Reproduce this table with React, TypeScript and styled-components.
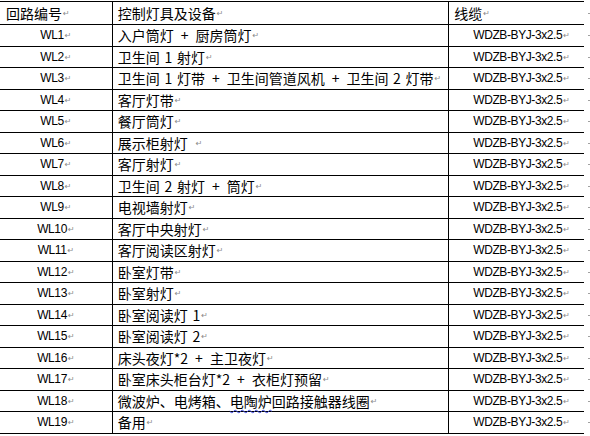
import React from 'react';
import styled, { createGlobalStyle } from 'styled-components';

const GlobalStyle = createGlobalStyle`
  html, body {
    margin: 0;
    padding: 0;
    background: #ffffff;
  }
  body {
    font-family: "Noto Sans CJK SC", "Liberation Sans", sans-serif;
    color: #000000;
  }
`;

const Sheet = styled.div`
  width: 590px;
  height: 436px;
  padding-top: 1px;
  box-sizing: border-box;
  overflow: hidden;
`;

const Row = styled.div<{ head?: boolean }>`
  display: flex;
  height: ${({ head }) => (head ? '24px' : '21.5px')};
`;

const Cell = styled.div<{ col: 'id' | 'desc' | 'cable'; head?: boolean; first?: boolean }>`
  box-sizing: border-box;
  display: flex;
  align-items: center;
  white-space: pre;
  border-bottom: 1px solid #000000;
  border-top: ${({ first }) => (first ? '1px solid #000000' : 'none')};
  width: ${({ col }) => (col === 'id' ? '113px' : col === 'desc' ? '337px' : '135px')};
  border-right: ${({ col }) => (col === 'cable' ? 'none' : '1px solid #000000')};
  justify-content: ${({ col, head }) => (head || col === 'desc' ? 'flex-start' : 'center')};
  padding-left: ${({ col, head }) =>
    head ? (col === 'id' ? '6px' : '5px') : col === 'desc' ? '5px' : col === 'cable' ? '10px' : '0'};
  font-size: 14px;
  line-height: 1;
`;

const Code = styled.span`
  font-family: "Liberation Sans", Arial, sans-serif;
  font-size: 12px;
  letter-spacing: -0.4px;
`;

const Han = styled.span`
  font-family: "Noto Sans CJK SC", sans-serif;
  font-size: 14px;
`;

const Spell = styled.span`
  text-decoration: underline wavy #3b46e0;
  text-decoration-thickness: 1px;
  text-underline-offset: 2px;
`;

const Mark = styled.span`
  font-family: "DejaVu Sans", sans-serif;
  font-size: 8px;
  color: #8a8a8a;
  margin-left: 1px;
  position: relative;
  top: 1px;
`;

const Tick = styled.div`
  width: 6px;
  display: flex;
  align-items: center;
  justify-content: flex-end;
  &::after {
    content: '';
    width: 2px;
    height: 1px;
    background: #a0a0a0;
  }
`;

type Item = { id: string; desc: React.ReactNode };

// wide gap around "+", narrower one around a digit, as in the Word original
const P = '\u2002+\u2002';
const S = '\u2004';

const items: Item[] = [
  { id: 'WL1', desc: `入户筒灯${P}厨房筒灯` },
  { id: 'WL2', desc: `卫生间${S}1${S}射灯` },
  { id: 'WL3', desc: `卫生间${S}1${S}灯带${P}卫生间管道风机${P}卫生间${S}2${S}灯带` },
  { id: 'WL4', desc: '客厅灯带' },
  { id: 'WL5', desc: '餐厅筒灯' },
  { id: 'WL6', desc: '展示柜射灯\u2002' },
  { id: 'WL7', desc: '客厅射灯' },
  { id: 'WL8', desc: `卫生间${S}2${S}射灯${P}筒灯` },
  { id: 'WL9', desc: '电视墙射灯' },
  { id: 'WL10', desc: '客厅中央射灯' },
  { id: 'WL11', desc: '客厅阅读区射灯' },
  { id: 'WL12', desc: '卧室灯带' },
  { id: 'WL13', desc: '卧室射灯' },
  { id: 'WL14', desc: `卧室阅读灯${S}1` },
  { id: 'WL15', desc: `卧室阅读灯${S}2` },
  { id: 'WL16', desc: `床头夜灯*2${P}主卫夜灯` },
  { id: 'WL17', desc: `卧室床头柜台灯*2${P}衣柜灯预留` },
  {
    id: 'WL18',
    desc: (
      <>
        微波炉、电烤箱、<Spell>电陶炉</Spell>回路接触器线圈
      </>
    ),
  },
  { id: 'WL19', desc: '备用' },
];

const CABLE = 'WDZB-BYJ-3x2.5';

export default function App() {
  return (
    <>
      <GlobalStyle />
      <Sheet>
        <Row head>
          <Cell col="id" head first>
            <Han>回路编号</Han>
            <Mark>↵</Mark>
          </Cell>
          <Cell col="desc" head first>
            <Han>控制灯具及设备</Han>
            <Mark>↵</Mark>
          </Cell>
          <Cell col="cable" head first>
            <Han>线缆</Han>
            <Mark>↵</Mark>
          </Cell>
          <Tick />
        </Row>
        {items.map((it) => (
          <Row key={it.id}>
            <Cell col="id">
              <Code>{it.id}</Code>
              <Mark>↵</Mark>
            </Cell>
            <Cell col="desc">
              <Han>{it.desc}</Han>
              <Mark>↵</Mark>
            </Cell>
            <Cell col="cable">
              <Code>{CABLE}</Code>
              <Mark>↵</Mark>
            </Cell>
            <Tick />
          </Row>
        ))}
      </Sheet>
    </>
  );
}
